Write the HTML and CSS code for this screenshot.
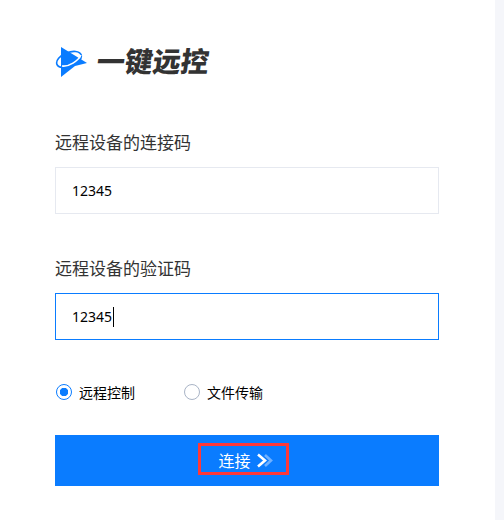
FILE: index.html
```html
<!DOCTYPE html>
<html lang="zh-CN">
<head>
    <meta charset="UTF-8">
    <meta name="viewport" content="width=device-width, initial-scale=1.0">
    <title>一键远控</title>
    <link rel="stylesheet" href="styles.css">
</head>
<body>
    <div class="container">
        <div class="logo">
            <svg class="logo-icon" width="34" height="32" viewBox="0 0 34 32">
                <ellipse class="logo-ring" cx="14" cy="13.5" rx="13" ry="7" transform="rotate(-22 14 13.5)"/>
                <path class="logo-fill" d="M6 1 L32 17 L20 20 L6 31 Z"/>
                <path class="logo-cut" d="M7 20 C14 21 23 15 26 9"/>
            </svg>
            <span class="logo-text">一键远控</span>
        </div>

        <div class="form-group">
            <div class="form-label">远程设备的连接码</div>
            <div class="form-input">12345</div>
        </div>

        <div class="form-group">
            <div class="form-label">远程设备的验证码</div>
            <div class="form-input active">12345<span class="caret"></span></div>
        </div>

        <div class="radio-row">
            <div class="radio-item checked"><span class="radio-dot"></span>远程控制</div>
            <div class="radio-item"><span class="radio-dot"></span>文件传输</div>
        </div>

        <div class="connect-button">
            <div class="connect-mark">
                连接
                <svg class="arrows" width="19" height="15" viewBox="0 0 19 15">
                    <path class="arrow-back" d="M9 2 L15 7.5 L9 13"/>
                    <path class="arrow-front" d="M2 1.5 L9 7.5 L2 13.5"/>
                </svg>
            </div>
        </div>
    </div>
</body>
</html>
```

FILE: styles.css
```css
* {
    box-sizing: border-box;
}

body {
    margin: 0;
    height: 520px;
    overflow: hidden;
    background: #f5f6fa;
    font-family: "Noto Sans", "Noto Sans CJK SC", sans-serif;
    color: #000;
}

.container {
    width: 495px;
    height: 520px;
    background: #fff;
    padding: 45px 56px 0 55px;
}

.logo {
    display: flex;
    align-items: center;
    gap: 8px;
    height: 33px;
    margin-bottom: 53px;
}

.logo-fill {
    fill: #0a7cff;
}

.logo-ring {
    fill: none;
    stroke: #0a7cff;
    stroke-width: 1.6;
}

.logo-cut {
    fill: none;
    stroke: #fff;
    stroke-width: 1.6;
}

.logo-text {
    font-size: 28px;
    font-weight: 900;
    line-height: 33px;
    color: #333;
    transform: skewX(-8deg);
}

.form-group {
    margin-bottom: 43px;
}

.form-group + .form-group {
    margin-bottom: 36px;
}

.form-label {
    font-size: 17px;
    line-height: 24px;
    height: 36px;
    margin-top: 8px;
    color: #333;
}

.form-input {
    display: flex;
    align-items: center;
    height: 47px;
    padding-left: 16px;
    border: 1px solid #e6e9f0;
    font-size: 14px;
}

.form-input.active {
    border-color: #0a7cff;
}

.caret {
    width: 1px;
    height: 20px;
    margin-left: 1px;
    background: #000;
}

.radio-row {
    display: flex;
    height: 32px;
    margin-bottom: 27px;
}

.radio-item {
    display: flex;
    align-items: center;
    gap: 7px;
    width: 128px;
    padding-left: 1px;
    font-size: 14px;
}

.radio-dot {
    width: 16px;
    height: 16px;
    border: 1.5px solid #a9b4c6;
    border-radius: 50%;
}

.radio-item.checked .radio-dot {
    border-color: #0a7cff;
    background: radial-gradient(circle, #0a7cff 0 4px, #fff 4.5px);
}

.connect-button {
    display: flex;
    align-items: center;
    justify-content: center;
    height: 51px;
    padding: 0 7px 3px 0;
    background: #0a7cff;
}

.connect-mark {
    display: flex;
    align-items: center;
    gap: 5px;
    height: 32px;
    padding: 2px 11px 0 17px;
    border: 3px solid #ff3838;
    color: #fff;
    font-size: 16px;
}

.arrows {
    fill: none;
    stroke-width: 2.6;
}

.arrow-front {
    stroke: #fff;
}

.arrow-back {
    stroke: #6fb0ff;
}
```
